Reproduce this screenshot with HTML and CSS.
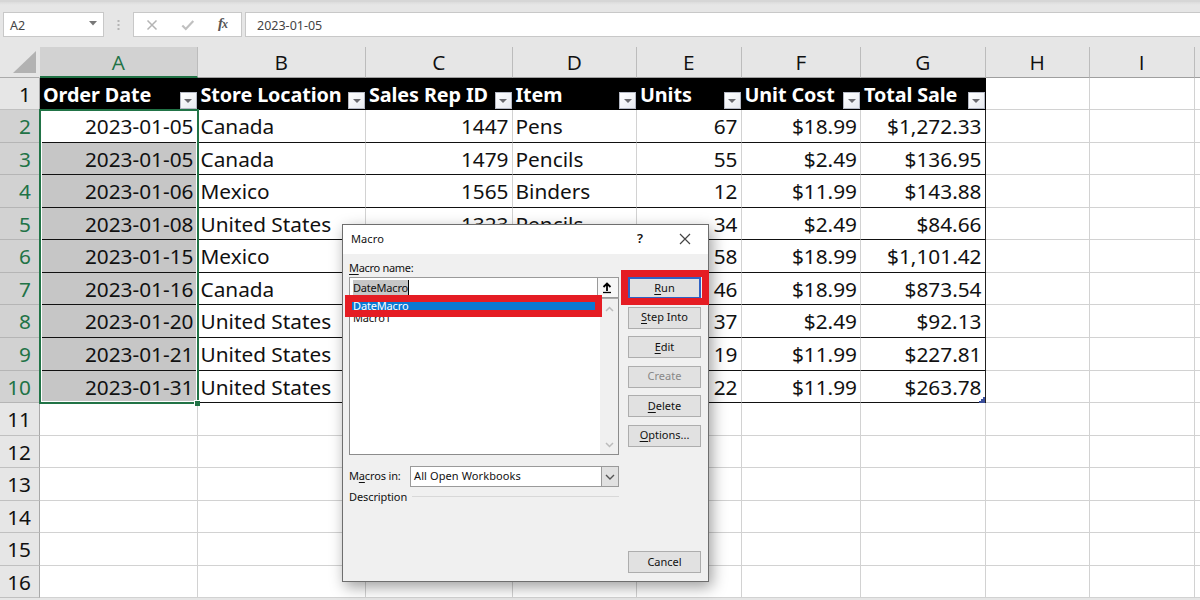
FILE: index.html
```
<!DOCTYPE html>
<html lang="en">
<head>
<meta charset="utf-8">
<title>Workbook</title>
<link rel="stylesheet" href="styles.css">
</head>
<body>
<div class="app">
  <div class="formula-bar">
    <div class="name-box"><span>A2</span><svg width="8" height="5" viewBox="0 0 8 5"><path d="M0 0h8L4 4.5z" fill="#777"/></svg></div>
    <svg class="grip" width="3" height="12" viewBox="0 0 3 12"><path d="M.5 1h2v2h-2zM.5 5h2v2h-2zM.5 9h2v2h-2z" fill="#b4b4b4"/></svg>
    <div class="fx-box">
      <svg width="12" height="12" viewBox="0 0 12 12"><path d="M1.5 1.5l9 9M10.5 1.5l-9 9" fill="none" stroke="#b4b4b4" stroke-width="1.5"/></svg>
      <svg width="14" height="12" viewBox="0 0 14 12"><path d="M1.3 6.5l3.500 3.500 7.500-8" fill="none" stroke="#c0c0c0" stroke-width="2.200"/></svg>
      <span class="fx">f<small>x</small></span>
    </div>
    <div class="formula">2023-01-05</div>
  </div>
  <div class="sheet">
    <div class="row heads">
      <div class="corner"><svg width="23" height="22" viewBox="0 0 23 22"><path d="M23 0v22H0z" fill="#b2b2b2"/></svg></div>
      <div class="on">A</div><div>B</div><div>C</div><div>D</div><div>E</div><div>F</div><div>G</div><div>H</div><div>I</div><div></div>
    </div>
    <div class="row titles"><div>1</div><div>Order Date<b></b></div><div>Store Location<b></b></div><div>Sales Rep ID<b></b></div><div>Item<b></b></div><div>Units<b></b></div><div>Unit Cost<b></b></div><div>Total Sale<b></b></div><div></div><div></div><div></div></div>
    <div class="row data active"><div>2</div><div>2023-01-05</div><div>Canada</div><div>1447</div><div>Pens</div><div>67</div><div>$18.99</div><div>$1,272.33</div><div></div><div></div><div></div></div>
    <div class="row data"><div>3</div><div>2023-01-05</div><div>Canada</div><div>1479</div><div>Pencils</div><div>55</div><div>$2.49</div><div>$136.95</div><div></div><div></div><div></div></div>
    <div class="row data"><div>4</div><div>2023-01-06</div><div>Mexico</div><div>1565</div><div>Binders</div><div>12</div><div>$11.99</div><div>$143.88</div><div></div><div></div><div></div></div>
    <div class="row data"><div>5</div><div>2023-01-08</div><div>United States</div><div>1323</div><div>Pencils</div><div>34</div><div>$2.49</div><div>$84.66</div><div></div><div></div><div></div></div>
    <div class="row data"><div>6</div><div>2023-01-15</div><div>Mexico</div><div></div><div></div><div>58</div><div>$18.99</div><div>$1,101.42</div><div></div><div></div><div></div></div>
    <div class="row data"><div>7</div><div>2023-01-16</div><div>Canada</div><div></div><div></div><div>46</div><div>$18.99</div><div>$873.54</div><div></div><div></div><div></div></div>
    <div class="row data"><div>8</div><div>2023-01-20</div><div>United States</div><div></div><div></div><div>37</div><div>$2.49</div><div>$92.13</div><div></div><div></div><div></div></div>
    <div class="row data"><div>9</div><div>2023-01-21</div><div>United States</div><div></div><div></div><div>19</div><div>$11.99</div><div>$227.81</div><div></div><div></div><div></div></div>
    <div class="row data last"><div>10</div><div>2023-01-31</div><div>United States</div><div></div><div></div><div>22</div><div>$11.99</div><div>$263.78</div><div></div><div></div><div></div></div>
    <div class="row"><div>11</div><div></div><div></div><div></div><div></div><div></div><div></div><div></div><div></div><div></div><div></div></div>
    <div class="row"><div>12</div><div></div><div></div><div></div><div></div><div></div><div></div><div></div><div></div><div></div><div></div></div>
    <div class="row"><div>13</div><div></div><div></div><div></div><div></div><div></div><div></div><div></div><div></div><div></div><div></div></div>
    <div class="row"><div>14</div><div></div><div></div><div></div><div></div><div></div><div></div><div></div><div></div><div></div><div></div></div>
    <div class="row"><div>15</div><div></div><div></div><div></div><div></div><div></div><div></div><div></div><div></div><div></div><div></div></div>
    <div class="row"><div>16</div><div></div><div></div><div></div><div></div><div></div><div></div><div></div><div></div><div></div><div></div></div>
  </div>
  <div class="selection"></div>
  <div class="fill-handle"></div>
  <svg class="table-corner" width="6" height="6" viewBox="0 0 6 6"><path d="M4 0h2v6H0V4h2V2h2z" fill="#3b4f9b"/></svg>

  <div class="dialog">
    <div class="title-bar"><span class="title">Macro</span><span class="help">?</span><svg width="12" height="12" viewBox="0 0 12 12"><path d="M1 1l10 10M11 1L1 11" fill="none" stroke="#444" stroke-width="1.2"/></svg></div>
    <div class="dialog-body">
      <div class="left">
        <div class="label"><u>M</u>acro name:</div>
        <div class="name-row"><div class="name-input"><span>DateMacro</span></div><div class="up"><svg width="10" height="12" viewBox="0 0 10 12"><path d="M5 9V2M1.5 5L5 1.5 8.500 5" fill="none" stroke="#000" stroke-width="1.8"/><path d="M1 10.500h8" stroke="#000" stroke-width="1.300"/></svg></div></div>
        <div class="list">
          <div class="items"><div class="item picked">DateMacro</div><div class="item">Macro1</div></div>
          <div class="scroll"><svg width="9" height="6" viewBox="0 0 9 6"><path d="M1 5l3.500-3.500L8 5" fill="none" stroke="#bcbcbc" stroke-width="1.500"/></svg><svg width="9" height="6" viewBox="0 0 9 6"><path d="M1 1l3.500 3.500L8 1" fill="none" stroke="#bcbcbc" stroke-width="1.500"/></svg></div>
        </div>
        <div class="in-row"><span>M<u>a</u>cros in:</span><div class="select"><span>All Open Workbooks</span><div class="drop"><svg width="10" height="6" viewBox="0 0 10 6"><path d="M1 1l4 4 4-4" fill="none" stroke="#555" stroke-width="1.400"/></svg></div></div></div>
        <div class="desc"><span>Description</span><hr></div>
      </div>
      <div class="buttons">
        <div class="button run"><span><u>R</u>un</span></div>
        <div class="button"><span><u>S</u>tep Into</span></div>
        <div class="button"><span><u>E</u>dit</span></div>
        <div class="button off"><span>Create</span></div>
        <div class="button"><span><u>D</u>elete</span></div>
        <div class="button"><span><u>O</u>ptions...</span></div>
        <div class="button cancel"><span>Cancel</span></div>
      </div>
    </div>
  </div>
  <div class="mark mark-list"></div>
  <div class="mark mark-run"></div>
</div>
</body>
</html>
```
FILE: styles.css
```
* { box-sizing: border-box; }
body { margin: 0; font-family: "Noto Sans", sans-serif; }
.app { position: relative; width: 1200px; height: 600px; overflow: hidden; background: #e6e6e6; color: #111; }

/* formula bar */
.formula-bar { display: flex; height: 47px; align-items: flex-start; border-top: 2px solid #d6d6d6; padding-left: 3px; padding-top: 10px; font-size: 12.5px; color: #444; background: linear-gradient(#dcdcdc 0, #e6e6e6 3px); }
.name-box { width: 101px; height: 25px; background: #fff; border: 1px solid #c8c8c8; display: flex; align-items: center; justify-content: space-between; padding: 1px 6px 0 6px; }
.name-box svg { margin-top: -3px; }
.grip { margin: 7px 14px 0 13px; }
.fx-box { width: 109px; height: 25px; margin-left: -1px; background: #fff; border: 1px solid #c8c8c8; display: flex; align-items: center; padding-left: 12px; gap: 23px; }
.fx { font: italic bold 15px/20px "Liberation Serif", serif; color: #555; margin-top: -3px; }
.fx small { font-size: 12px; margin-left: -1px; }
.formula { flex: 1; height: 25px; margin-left: 3px; background: #fff; border: 1px solid #c8c8c8; border-right: 0; padding-left: 11px; line-height: 25px; }

/* grid */
.row { display: grid; grid-template-columns: 40px 157.500px 168.500px 146.500px 124.500px 104.500px 119.500px 124.500px 104.500px 104.500px 1fr; height: 32.570px; width: 1200px; background: #fff; font-size: 20.800px; line-height: 33px; }
.row > div { border-right: 1px solid #d2d2d2; border-bottom: 1px solid #d2d2d2; white-space: nowrap; padding: 0 3px; min-width: 0; overflow: hidden; }
.row > div:first-child { background: #e6e6e6; text-align: right; padding-right: 8px; border-right-color: #a9a9a9; border-bottom-color: #c0c0c0; }
.row > div:last-child { border-right: 0; }
.row.heads { height: 31px; background: #e6e6e6; font-family: "Open Sans", sans-serif; line-height: 31px; text-align: center; }
.row.heads > div { border-right-color: #bcbcbc; border-bottom-color: #9f9f9f; }
.row.heads > .corner { display: flex; padding: 4px 2px 0 13px; border-color: #e6e6e6; border-bottom-color: #ababab; }
.row.heads > .on { background: #d2d2d2; color: #217346; border-bottom: 2px solid #217346; }
.row.titles { font-weight: 700; height: 32px; line-height: 33px; }
.titles > div:first-child { font-weight: 400; }
.titles > div:nth-child(n+2):nth-child(-n+8) { background: #000; color: #fff; border-color: #000; display: flex; justify-content: space-between; align-items: flex-start; padding-right: 0; font-size: 19.800px; letter-spacing: -.1px; }
.titles b { flex: none; align-self: flex-end; width: 17px; height: 17px; margin-left: -4px; background: linear-gradient(135deg, #fff, #e6e9f0); border: 1px solid #b4b8c4; display: flex; align-items: center; justify-content: center; }
.titles b::after { content: ""; border: 4px solid transparent; border-top: 4px solid #6b6b70; border-bottom: 0; }
.data > div:nth-child(-n+8) { border-bottom-color: #111; }
.data > div:first-child { background: #d2d2d2; color: #217346; border-bottom-color: #b5b5b5; }
.data > div:nth-child(2) { background: #c6c6c6; text-align: right; }
.data.active > div:nth-child(2) { background: #fff; }
.data > div:nth-child(4), .data > div:nth-child(6), .data > div:nth-child(7), .data > div:nth-child(8) { text-align: right; }
.data > div:nth-child(8) { border-right-color: #222; }
.selection { position: absolute; left: 39px; top: 109px; width: 160px; height: 295px; border: 2px solid #217346; box-shadow: inset 0 0 0 1px #fff; }
.fill-handle { position: absolute; left: 194px; top: 400px; width: 6px; height: 6px; background: #217346; border-left: 1px solid #fff; border-top: 1px solid #fff; }
.table-corner { position: absolute; left: 979px; top: 397px; }

/* dialog */
.dialog { position: absolute; left: 342px; top: 224px; width: 367px; height: 358px; background: #f0f0f0; border: 1px solid #6e6e6e; box-shadow: 3px 5px 14px rgba(0,0,0,.38); font-size: 11px; line-height: 15px; color: #111; }
.title-bar { display: flex; align-items: center; height: 29px; background: #fff; padding: 0 17px 2px 8px; }
.title { flex: 1; letter-spacing: .1px; }
.help { font-size: 13px; font-weight: 600; margin-right: 36px; }
.dialog-body { display: grid; grid-template-columns: 270px 73px; column-gap: 9px; padding-left: 6px; height: 327px; }
.dialog u { text-underline-offset: 2px; }
.label { height: 23px; padding-top: 6px; letter-spacing: -.3px; }
.name-row { display: flex; height: 21px; }
.name-input { flex: 1; background: #fff; border: 1px solid #9a9a9a; border-bottom: 0; padding: 2px 3px; }
.name-input span { display: inline-block; background: #c6c6c6; border-right: 1px solid #000; letter-spacing: -.2px; }
.up { width: 21px; margin-left: -1px; border: 1px solid #9a9a9a; display: flex; align-items: center; justify-content: center; background: #f7f7f7; }
.name-row .up { width: 22px; padding-right: 2px; }
.list { display: flex; height: 157px; background: #fff; border: 1px solid #8c8c8c; border-top-color: #aaa; }
.items { flex: 1; letter-spacing: -.15px; }
.item { height: 13px; padding-left: 3px; line-height: 13px; }
.item + .item { line-height: 12px; }
.picked { position: relative; z-index: 3; color: #fff; }
.scroll { width: 18px; background: #f0f0f0; display: flex; flex-direction: column; justify-content: space-between; align-items: center; padding: 7px 0 6px; }
.in-row { display: flex; align-items: center; justify-content: space-between; margin-top: 11px; height: 21px; }
.in-row > span { margin-top: -2px; letter-spacing: -.15px; }
.select { width: 209px; height: 21px; background: #fff; border: 1px solid #9a9a9a; display: flex; justify-content: space-between; align-items: center; padding-left: 3px; }
.select > span { margin-top: -2px; letter-spacing: .1px; }
.drop { width: 18px; height: 21px; border: 1px solid #9a9a9a; background: #e1e1e1; display: flex; align-items: center; justify-content: center; margin-right: -1px; }
.desc { display: flex; align-items: center; gap: 5px; margin-top: 2px; letter-spacing: -.1px; }
.desc hr { flex: 1; border: 0; border-top: 1px solid #d8d8d8; margin: 0; }
.buttons { display: flex; flex-direction: column; gap: 7.600px; padding-top: 23px; }
.button { height: 22px; border: 1px solid #adadad; background: #e1e1e1; display: flex; align-items: center; justify-content: center; padding-bottom: 2px; }
.run { border: 2px solid #2f62c4; }
.off { color: #888; }
.cancel { margin-top: 96.500px; }

/* red call-outs */
.mark { position: absolute; border: 7px solid #e51c23; }
.mark-list { left: 345px; top: 295px; width: 257px; height: 22px; background: #0a78d2; }
.mark-run { left: 621px; top: 270px; width: 88px; height: 35px; }
```
